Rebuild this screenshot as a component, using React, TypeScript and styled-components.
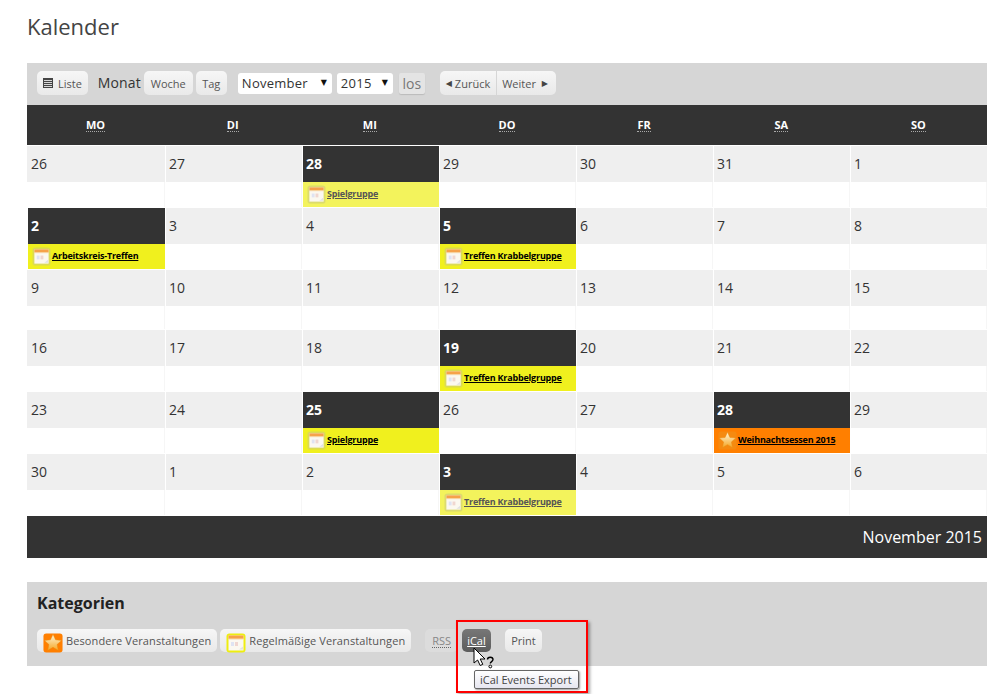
import React from "react";
import styled, { createGlobalStyle } from "styled-components";

const Global = createGlobalStyle`
  html, body { margin: 0; padding: 0; background: #fff; }
  body { font-family: "Open Sans", "Liberation Sans", sans-serif; color: #333; }
`;

const Page = styled.div`
  width: 960px;
  height: 694px;
  padding: 0 21px 0 27px;
  position: relative;
  overflow: hidden;
`;
const Title = styled.h1`
  margin: 0;
  padding-top: 11px;
  height: 63px;
  box-sizing: border-box;
  font-size: 22px;
  line-height: 30px;
  font-weight: 400;
  color: #444;
`;
const Toolbar = styled.div`
  height: 42px;
  background: #d6d6d6;
  display: flex;
  align-items: center;
  padding-left: 10px;
  padding-bottom: 2px;
  box-sizing: border-box;
`;
const Button = styled.span<{ $ml?: number; $active?: boolean; $left?: boolean; $right?: boolean; $h?: number; $px?: number; $ghost?: boolean }>`
  display: inline-flex;
  align-items: center;
  height: ${p => p.$h ?? 24}px;
  padding: 0 ${p => p.$px ?? 7}px;
  box-sizing: border-box;
  margin-left: ${p => p.$ml ?? 0}px;
  border-radius: ${p => (p.$left ? "5px 0 0 5px" : p.$right ? "0 5px 5px 0" : "5px")};
  background: ${p =>
    p.$active ? "linear-gradient(#777, #5c5c5c)" : p.$ghost ? "#dcdcdc" : "linear-gradient(#f6f6f6, #e9e9e9)"};
  color: ${p => (p.$active ? "#fff" : "#555")};
  font-size: 11px;
  white-space: nowrap;
`;
const ListIcon = styled.svg`
  margin-right: 5px;
`;
const MonthLabel = styled.span`
  font-size: 14px;
  color: #333;
  margin-left: 10px;
  margin-right: 3px;
  letter-spacing: 0.1px;
  position: relative;
  top: -1px;
`;
const SelectBox = styled.span<{ $w: number; $ml: number }>`
  display: inline-flex;
  align-items: center;
  justify-content: space-between;
  width: ${p => p.$w}px;
  height: 21px;
  margin-left: ${p => p.$ml}px;
  padding: 0 5px 0 4px;
  box-sizing: border-box;
  background: #fff;
  border-radius: 3px;
  font-size: 13px;
  letter-spacing: 0.25px;
  color: #333;
`;
const Caret = styled.span`
  font-family: "DejaVu Sans", sans-serif;
  font-size: 8px;
  letter-spacing: 0;
  color: #111;
  position: relative;
  top: -1px;
`;
const GoButton = styled.span`
  display: inline-flex;
  align-items: center;
  justify-content: center;
  width: 26px;
  height: 21px;
  margin-left: 6px;
  background: #e4e4e4;
  color: #777;
  font-size: 14px;
  border-radius: 2px;
  box-shadow: 0 1px 1px #bbb;
`;
const Tri = styled.span`
  font-family: "DejaVu Sans", sans-serif;
  font-size: 8px;
  color: #444;
  width: 9px;
  flex: none;
`;
const HeadRow = styled.div`
  display: grid;
  grid-template-columns: repeat(7, 1fr);
  height: 40px;
  background: #333;
`;
const Row = styled.div<{ $h: number }>`
  display: grid;
  grid-template-columns: 139px 137px 137px 137px 137px 137px 136px;
  height: ${p => p.$h}px;
`;
const HeadCell = styled.div`
  color: #fff;
  font-size: 11px;
  font-weight: 700;
  display: flex;
  align-items: center;
  justify-content: center;
`;
const HeadAbbr = styled.span`
  border-bottom: 1px dotted #aaa;
  line-height: 13px;
`;
const DateCell = styled.div<{ $event?: boolean; $top?: boolean }>`
  box-sizing: border-box;
  margin: ${p => (p.$top ? 1 : 0)}px 1px 0 0;
  padding-left: 3px;
  background: ${p => (p.$event ? "#333" : "#efefef")};
  color: ${p => (p.$event ? "#fff" : "#333")};
  font-weight: ${p => (p.$event ? 700 : 400)};
  font-size: 14px;
  line-height: 36px;
  &:first-child {
    padding-left: ${p => (p.$event ? 3 : 4)}px;
    margin-left: ${p => (p.$event ? 1 : 0)}px;
  }
  &:last-child {
    margin-right: 0;
  }
`;
const EventCell = styled.div<{ $tone?: "yellow" | "faded" | "orange" }>`
  box-sizing: border-box;
  margin-right: 1px;
  margin-bottom: 1px;
  border-right: ${p => (p.$tone ? "0" : "1px solid #f6f6f6")};
  background: ${p =>
    p.$tone === "yellow" ? "#f0f01e" : p.$tone === "faded" ? "#f3f35c" : p.$tone === "orange" ? "#ff7f00" : "#fff"};
  display: flex;
  align-items: center;
  padding-left: 4px;
  gap: 1px;
  min-width: 0;
  &:first-child {
    margin-left: ${p => (p.$tone ? 1 : 0)}px;
  }
  &:last-child {
    margin-right: 0;
  }
`;
const EventLink = styled.a<{ $faded?: boolean }>`
  color: ${p => (p.$faded ? "#555" : "#000")};
  font-size: 9px;
  font-weight: 700;
  letter-spacing: -0.2px;
  text-decoration: underline;
  white-space: nowrap;
  position: relative;
  top: -1px;
`;
const Footer = styled.div`
  height: 42px;
  background: #333;
  color: #fff;
  font-size: 16px;
  display: flex;
  align-items: center;
  justify-content: flex-end;
  padding-right: 5px;
`;
const Categories = styled.section`
  margin-top: 24px;
  height: 84px;
  box-sizing: border-box;
  background: #d6d6d6;
  padding: 10px 10px 0;
`;
const CatTitle = styled.h2`
  margin: 0 0 15px;
  font-size: 16px;
  line-height: 22px;
  font-weight: 700;
  color: #222;
`;
const CatRow = styled.div`
  display: flex;
  align-items: center;
`;
const CatButton = styled(Button)`
  padding: 0 6px;
  gap: 3px;
  height: 23px;
  letter-spacing: 0.1px;
`;
const CatIconSlot = styled.span`
  display: flex;
  flex: none;
  margin-top: 5px;
`;
const RssText = styled.span`
  font-size: 11px;
  color: #888;
  border-bottom: 1px dotted #666;
  line-height: 13px;
`;
const IcalText = styled.span`
  text-decoration: underline;
`;
const Highlight = styled.div`
  position: absolute;
  left: 456px;
  top: 620px;
  width: 132px;
  height: 73px;
  box-sizing: border-box;
  border: 2px solid #f00;
  box-shadow: 2px 2px 3px rgba(0, 0, 0, 0.35);
`;
const Tooltip = styled.div`
  position: absolute;
  left: 474px;
  top: 670px;
  height: 19px;
  width: 105px;
  padding: 0 5px;
  display: flex;
  align-items: center;
  box-sizing: border-box;
  background: linear-gradient(#fff, #e6e6f0);
  border: 1px solid #666;
  border-radius: 2px;
  box-shadow: 1px 1px 2px rgba(0, 0, 0, 0.4);
  color: #444;
  font-size: 11px;
  white-space: nowrap;
`;
const Cursor = styled.svg`
  position: absolute;
  left: 473px;
  top: 647px;
`;

const CalIcon = ({ ring, size = 19 }: { ring?: string; size?: number }) => (
  <svg width={size} height={size} viewBox="0 0 20 20" style={{ flex: "none" }}>
    <rect x="0.5" y="0.5" width="19" height="19" rx="3" fill={ring ?? "rgba(205,205,120,.6)"} />
    <rect x="2.5" y="2.5" width="15" height="15" fill="#fbf8f0" />
    <rect x="2.5" y="2.5" width="15" height="3.5" fill="#f6a24a" />
    <rect x="2.5" y="5.5" width="15" height="1" fill="#f7d9a8" />
    <rect x="5" y="9" width="3" height="4" fill="#dfe3f2" />
    <rect x="9" y="9" width="3" height="4" fill="#f0d6d0" />
    <path d="M13 16.5l4-3v3z" fill="#e2e2e2" />
  </svg>
);
const StarIcon = ({ size = 20, bg = "#ff7f00" }: { size?: number; bg?: string }) => (
  <svg width={size} height={size} viewBox="0 0 22 22" style={{ flex: "none" }}>
    <defs>
      <linearGradient id="st" x1="0" y1="0" x2="0" y2="1">
        <stop offset="0" stopColor="#fff6d8" />
        <stop offset="1" stopColor="#f5a623" />
      </linearGradient>
    </defs>
    <rect x="0.5" y="0.5" width="21" height="21" rx="3" fill={bg} />
    <path d="M11 1.5l2.8 6 6.6.7-4.9 4.5 1.4 6.6L11 15.8 5.1 19.3l1.4-6.6-4.9-4.5 6.6-.7z" fill="url(#st)" stroke="#e98a10" strokeWidth=".5" />
  </svg>
);

const days = ["MO", "DI", "MI", "DO", "FR", "SA", "SO"];
type Ev = { col: number; text: string; tone: "yellow" | "faded" | "orange" };
const weeks: { dates: number[]; dark: number[]; ev: Ev[]; h: [number, number] }[] = [
  { dates: [26, 27, 28, 29, 30, 31, 1], dark: [2], ev: [{ col: 2, text: "Spielgruppe", tone: "faded" }], h: [37, 26] },
  {
    dates: [2, 3, 4, 5, 6, 7, 8],
    dark: [0, 3],
    ev: [
      { col: 0, text: "Arbeitskreis-Treffen", tone: "yellow" },
      { col: 3, text: "Treffen Krabbelgruppe", tone: "yellow" },
    ],
    h: [36, 26],
  },
  { dates: [9, 10, 11, 12, 13, 14, 15], dark: [], ev: [], h: [36, 24] },
  { dates: [16, 17, 18, 19, 20, 21, 22], dark: [3], ev: [{ col: 3, text: "Treffen Krabbelgruppe", tone: "yellow" }], h: [36, 26] },
  {
    dates: [23, 24, 25, 26, 27, 28, 29],
    dark: [2, 5],
    ev: [
      { col: 2, text: "Spielgruppe", tone: "yellow" },
      { col: 5, text: "Weihnachtsessen 2015", tone: "orange" },
    ],
    h: [36, 26],
  },
  { dates: [30, 1, 2, 3, 4, 5, 6], dark: [3], ev: [{ col: 3, text: "Treffen Krabbelgruppe", tone: "faded" }], h: [36, 26] },
];

export default function App() {
  return (
    <Page>
      <Global />
      <Title>Kalender</Title>
      <Toolbar>
        <Button $px={6}>
          <ListIcon width="10" height="10" viewBox="0 0 10 10">
            <rect x="0" y="0" width="10" height="10" fill="#444" />
            <path d="M1 2.5h8M1 4.5h8M1 6.5h8M1 8.5h8" stroke="#e8e8e8" strokeWidth=".9" />
          </ListIcon>
          Liste
        </Button>
        <MonthLabel>Monat</MonthLabel>
        <Button>Woche</Button>
        <Button $ml={3} $px={6.5}>Tag</Button>
        <SelectBox $w={94} $ml={11}>
          November<Caret>▼</Caret>
        </SelectBox>
        <SelectBox $w={56} $ml={5}>
          2015<Caret>▼</Caret>
        </SelectBox>
        <GoButton>los</GoButton>
        <Button $ml={15} $left $px={6}>
          <Tri>◀</Tri>Zurück
        </Button>
        <Button $ml={1} $right $px={5}>
          Weiter&nbsp;&nbsp;<Tri>▶</Tri>
        </Button>
      </Toolbar>
      <HeadRow>
        {days.map(d => (
          <HeadCell key={d}>
            <HeadAbbr>{d}</HeadAbbr>
          </HeadCell>
        ))}
      </HeadRow>
      {weeks.map((w, i) => (
        <React.Fragment key={i}>
          <Row $h={w.h[0]}>
            {w.dates.map((d, c) => (
              <DateCell key={c} $event={w.dark.includes(c)} $top={i === 0}>
                {d}
              </DateCell>
            ))}
          </Row>
          <Row $h={w.h[1]}>
            {w.dates.map((_, c) => {
              const e = w.ev.find(x => x.col === c);
              return (
                <EventCell key={c} $tone={e?.tone}>
                  {e && (e.tone === "orange" ? <StarIcon size={19} bg="#f58a10" /> : <CalIcon />)}
                  {e && <EventLink $faded={e.tone === "faded"}>{e.text}</EventLink>}
                </EventCell>
              );
            })}
          </Row>
        </React.Fragment>
      ))}
      <Footer>November 2015</Footer>
      <Categories>
        <CatTitle>Kategorien</CatTitle>
        <CatRow>
          <CatButton>
            <CatIconSlot>
              <StarIcon size={20} />
            </CatIconSlot>
            Besondere Veranstaltungen
          </CatButton>
          <CatButton $ml={3}>
            <CatIconSlot>
              <CalIcon size={20} ring="#eeee10" />
            </CatIconSlot>
            Regelmäßige Veranstaltungen
          </CatButton>
          <Button $ml={14} $h={23} $ghost $px={7}>
            <RssText>RSS</RssText>
          </Button>
          <Button $ml={4} $active $h={23} $px={5}>
            <IcalText>iCal</IcalText>
          </Button>
          <Button $ml={14} $h={23} $px={6.5}>
            Print
          </Button>
        </CatRow>
      </Categories>
      <Highlight />
      <Cursor width="26" height="24" viewBox="0 0 26 24">
        <path d="M1 1v15l3.6-3 2.6 5.5 2.6-1.2-2.6-5.3h4.8z" fill="#fff" stroke="#000" strokeWidth="1" />
        <path d="M14.5 12.5c0-3 5.5-3 5.5 0 0 2-2.7 2.2-2.7 4" fill="none" stroke="#000" strokeWidth="1.4" />
        <circle cx="17.3" cy="19.5" r="1.4" fill="#fff" stroke="#000" strokeWidth="1" />
      </Cursor>
      <Tooltip>iCal Events Export</Tooltip>
    </Page>
  );
}
